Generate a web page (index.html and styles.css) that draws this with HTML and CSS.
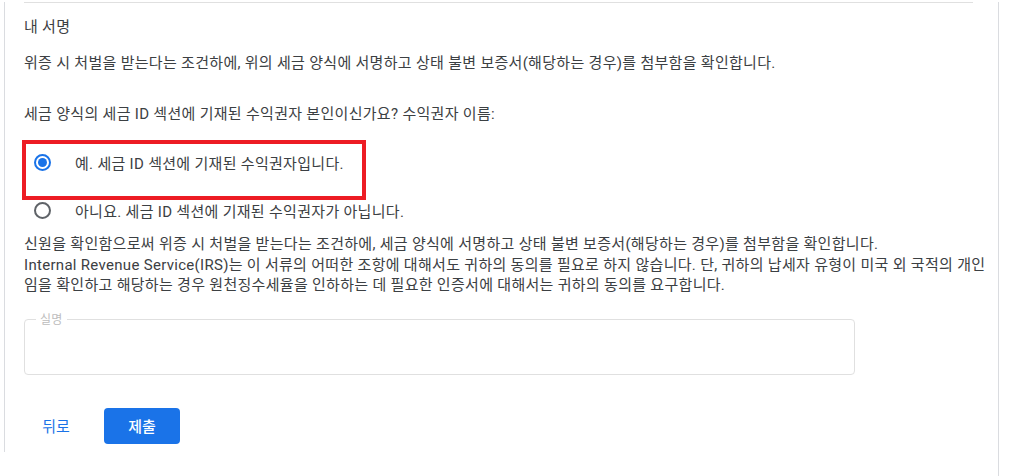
FILE: index.html
```html
<!DOCTYPE html>
<html lang="ko">

<head>
  <meta charset="UTF-8">
  <meta name="viewport" content="width=device-width, initial-scale=1.0">
  <title>내 서명</title>
  <link rel="stylesheet" href="styles.css">
</head>

<body>
  <div class="page">
    <div class="card">
      <div class="divider"></div>

      <h2 class="section-title">내 서명</h2>
      <p class="intro">위증 시 처벌을 받는다는 조건하에, 위의 세금 양식에 서명하고 상태 불변 보증서(해당하는 경우)를 첨부함을 확인합니다.</p>

      <p class="question">세금 양식의 세금 ID 섹션에 기재된 수익권자 본인이신가요? 수익권자 이름:</p>

      <!-- 수익권자 선택 -->
      <div class="options">
        <label class="option highlight">
          <span class="radio checked"></span>
          <span class="option-text">예. 세금 ID 섹션에 기재된 수익권자입니다.</span>
        </label>
        <label class="option">
          <span class="radio"></span>
          <span class="option-text">아니요. 세금 ID 섹션에 기재된 수익권자가 아닙니다.</span>
        </label>
      </div>

      <p class="notice">신원을 확인함으로써 위증 시 처벌을 받는다는 조건하에, 세금 양식에 서명하고 상태 불변 보증서(해당하는 경우)를 첨부함을 확인합니다.<br>Internal Revenue Service(IRS)는 이 서류의 어떠한 조항에 대해서도 귀하의 동의를 필요로 하지 않습니다. 단, 귀하의 납세자 유형이 미국 외 국적의 개인임을 확인하고 해당하는 경우 원천징수세율을 인하하는 데 필요한 인증서에 대해서는 귀하의 동의를 요구합니다.</p>

      <fieldset class="name-field">
        <legend>실명</legend>
        <input type="text" class="name-input">
      </fieldset>

      <div class="actions">
        <button class="btn btn-text">뒤로</button>
        <button class="btn btn-primary">제출</button>
      </div>
    </div>
  </div>
</body>

</html>
```

FILE: styles.css
```css
* {
  margin: 0;
  padding: 0;
  box-sizing: border-box;
}

body {
  font-family: Roboto, "Noto Sans CJK KR", sans-serif;
  font-size: 15px;
  letter-spacing: 0.3px;
  color: #3c4043;
  background: #fff;
}

.page {
  width: 999px;
  height: 476px;
  border-right: 1px solid #dadce0;
}

.card {
  margin-left: 4px;
  width: 970px;
  height: 450px;
  border-left: 1px solid #dadce0;
  padding-left: 19px;
}

.divider {
  margin-top: 2px;
  height: 1px;
  width: 949px;
  background: #e0e0e0;
}

.section-title {
  margin-top: 14px;
  font-size: 15px;
  font-weight: 400;
  line-height: 20px;
}

.intro {
  margin-top: 16px;
  line-height: 20px;
}

.question {
  margin-top: 31px;
  line-height: 20px;
}

.options {
  margin-top: 14px;
}

.option {
  display: flex;
  align-items: center;
  height: 48px;
  padding-left: 10px;
  cursor: pointer;
}

.option.highlight {
  position: relative;
}

.option.highlight::after {
  content: "";
  position: absolute;
  top: 2px;
  left: -2px;
  width: 336px;
  height: 52px;
  border: 4px solid #ed1c24;
}

.radio {
  width: 17px;
  height: 17px;
  border: 2px solid #5f6368;
  border-radius: 50%;
  display: flex;
  align-items: center;
  justify-content: center;
}

.radio.checked {
  border-color: #1a73e8;
}

.radio.checked::before {
  content: "";
  width: 9px;
  height: 9px;
  border-radius: 50%;
  background: #1a73e8;
}

.option-text {
  margin-left: 24px;
}

.notice {
  width: 964px;
  line-height: 20.5px;
}

.name-field {
  margin-top: 17px;
  width: 831px;
  border: 1px solid #e0e0e0;
  border-radius: 4px;
  padding: 0 11px;
}

.name-field legend {
  padding: 0 4px;
  font-size: 12px;
  line-height: 14px;
  color: #bdbdbd;
}

.name-input {
  display: block;
  width: 100%;
  height: 47px;
  border: none;
  outline: none;
  font: inherit;
  background: transparent;
}

.actions {
  margin-top: 33px;
  display: flex;
  gap: 16px;
}

.btn {
  height: 36px;
  border: none;
  border-radius: 4px;
  font-family: inherit;
  font-size: 15px;
  cursor: pointer;
}

.btn-text {
  width: 64px;
  background: transparent;
  color: #1a73e8;
}

.btn-primary {
  width: 76px;
  background: #1a73e8;
  color: #fff;
  font-weight: 500;
}
```
